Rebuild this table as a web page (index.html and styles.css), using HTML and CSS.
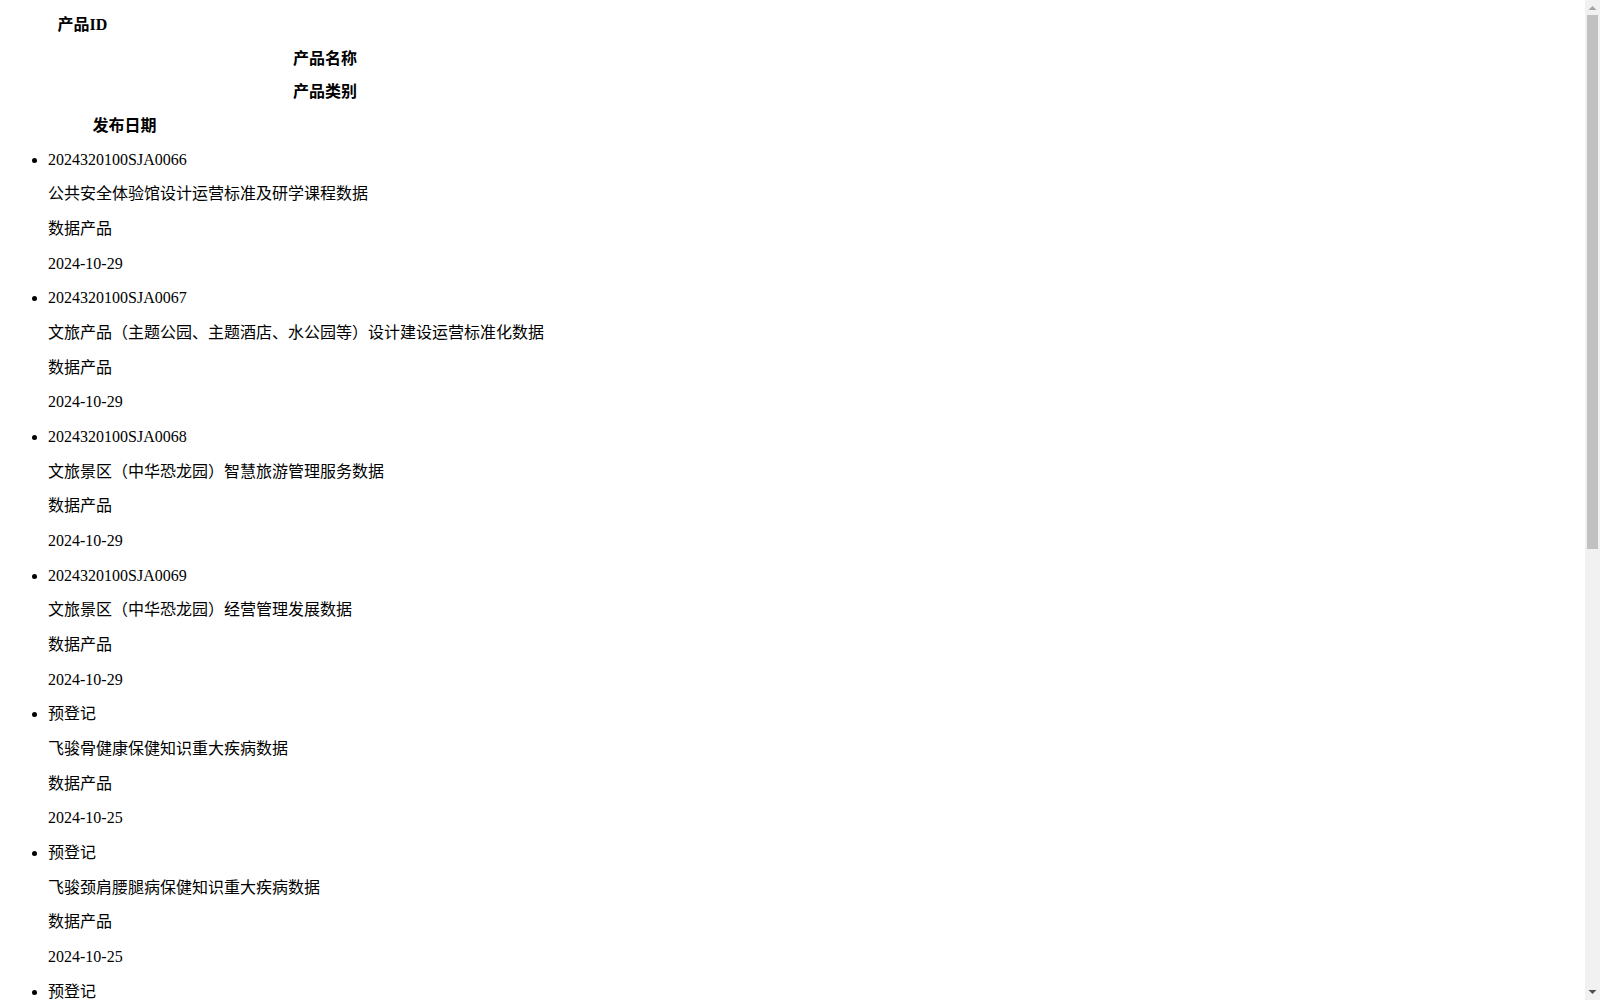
FILE: index.html
```html
<!DOCTYPE html>
<html lang="zh-CN">
<head>
<meta charset="utf-8">
<title>产品列表</title>
<link rel="stylesheet" href="styles.css">
</head>
<body>
<div class="page">
  <div class="head">
    <div class="th th-id">产品ID</div>
    <div class="th th-name">产品名称</div>
    <div class="th th-name">产品类别</div>
    <div class="th th-date">发布日期</div>
  </div>
  <ul class="list">
    <li><p>2024320100SJA0066</p><p>公共安全体验馆设计运营标准及研学课程数据</p><p>数据产品</p><p>2024-10-29</p></li>
    <li><p>2024320100SJA0067</p><p>文旅产品（主题公园、主题酒店、水公园等）设计建设运营标准化数据</p><p>数据产品</p><p>2024-10-29</p></li>
    <li><p>2024320100SJA0068</p><p>文旅景区（中华恐龙园）智慧旅游管理服务数据</p><p>数据产品</p><p>2024-10-29</p></li>
    <li><p>2024320100SJA0069</p><p>文旅景区（中华恐龙园）经营管理发展数据</p><p>数据产品</p><p>2024-10-29</p></li>
    <li><p>预登记</p><p>飞骏骨健康保健知识重大疾病数据</p><p>数据产品</p><p>2024-10-25</p></li>
    <li><p>预登记</p><p>飞骏颈肩腰腿病保健知识重大疾病数据</p><p>数据产品</p><p>2024-10-25</p></li>
    <li><p>预登记</p><p>飞骏心脑血管保健知识重大疾病数据</p><p>数据产品</p><p>2024-10-25</p></li>
    <li><p>预登记</p><p>飞骏糖尿病保健知识重大疾病数据</p><p>数据产品</p><p>2024-10-25</p></li>
    <li><p>预登记</p><p>飞骏呼吸系统保健知识重大疾病数据</p><p>数据产品</p><p>2024-10-25</p></li>
    <li><p>预登记</p><p>飞骏消化系统保健知识重大疾病数据</p><p>数据产品</p><p>2024-10-25</p></li>
    <li><p>预登记</p><p>飞骏睡眠健康保健知识数据</p><p>数据产品</p><p>2024-10-25</p></li>
    <li><p>预登记</p><p>飞骏老年人慢病管理保健知识数据</p><p>数据产品</p><p>2024-10-25</p></li>
  </ul>
</div>
<div class="scrollbar" aria-hidden="true">
  <div class="sb-btn">
    <svg width="15" height="15" viewBox="0 0 15 15"><polygon points="3.5,10 7.5,6 11.5,10" fill="#a3a3a3"/></svg>
  </div>
  <div class="sb-track"><div class="sb-thumb"></div></div>
  <div class="sb-btn">
    <svg width="15" height="15" viewBox="0 0 15 15"><polygon points="3.5,5 11.5,5 7.5,9" fill="#505050"/></svg>
  </div>
</div>
</body>
</html>
```
FILE: styles.css
```css
html, body {
  margin: 0;
  padding: 0;
  background: #ffffff;
  overflow: hidden;
}
body {
  color: #000000;
  font-family: "Liberation Serif", "Noto Sans CJK SC", serif;
  font-size: 16px;
  line-height: 18.65px;
}
.page {
  display: flow-root;
  padding: 0 23px 8px 8px;
}
.th {
  margin: 16px 0;
  font-weight: bold;
  line-height: 17.7px;
  text-align: center;
}
.th-id {
  width: 149px;
}
.th-name {
  width: 634px;
}
.th-date {
  width: 233px;
}
.list {
  margin: 16px 0;
  padding-left: 40px;
  list-style: disc;
}
.list p {
  margin: 16px 0;
}
.scrollbar {
  position: fixed;
  top: 0;
  right: 0;
  width: 15px;
  height: 100vh;
  display: flex;
  flex-direction: column;
  background: #f1f1f1;
}
.sb-btn {
  flex: none;
  height: 15px;
}
.sb-btn svg {
  display: block;
}
.sb-track {
  flex: 1;
  padding: 0 2px;
}
.sb-thumb {
  height: 534px;
  background: #c1c1c1;
}
```
